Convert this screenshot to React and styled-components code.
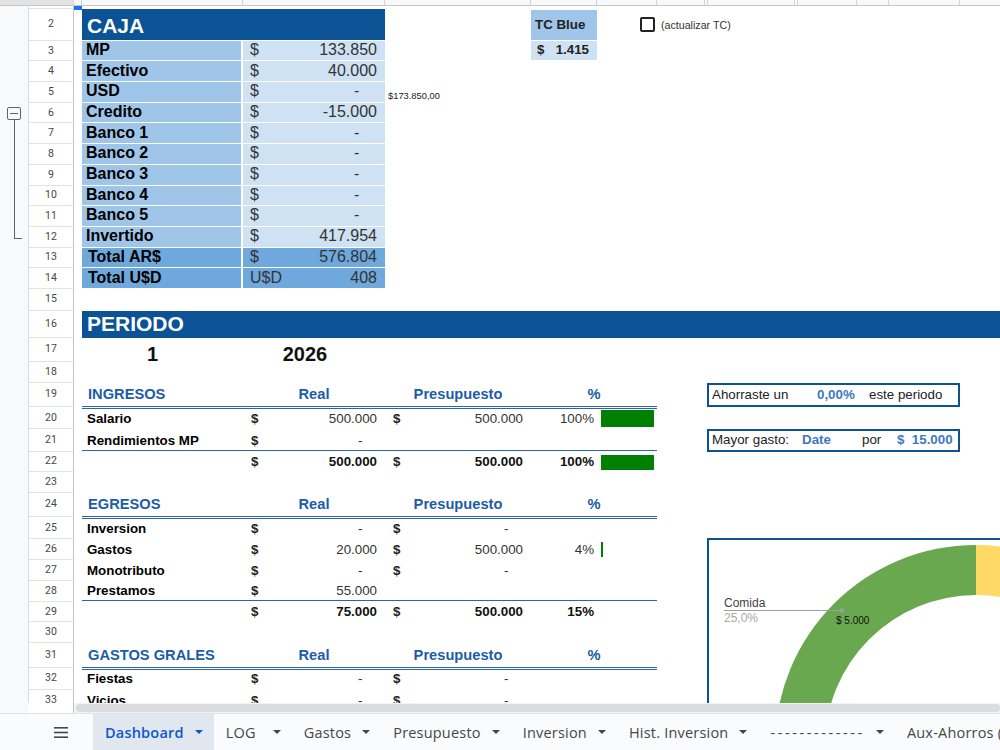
import React from 'react';
import styled, { createGlobalStyle, css } from 'styled-components';

const GlobalStyle = createGlobalStyle`
  html, body { margin: 0; padding: 0; background: #fff; }
  body { font-family: "Liberation Sans", Arial, sans-serif; overflow: hidden; }
  * { box-sizing: border-box; }
`;

// sheet geometry, taken from the row/column guides
const ROWS = [
  3, 31.7, ...Array(12).fill(20.7), 21.6, 27, 24, 21, 24.6, 22, 22.4, 20.6,
  20.4, 24.6, 22.4, 20.6, 21, 20.7, 20.7, 21, 24.6, 21.7, 21.7, 21,
];
const COLS = [28, 46, 8, 161, 142, 146, 66, 60, 50, 253, 120];
const STRIP = [74, 8, 161, 142, 146, 66, 60, 48, 3, 87, 3, 59, 32, 71, 100];

const Screen = styled.div`
  width: 1000px;
  height: 750px;
  overflow: hidden;
  display: flex;
  flex-direction: column;
  background: #fff;
`;

const ColumnStrip = styled.div`
  height: 6px;
  flex: none;
  display: flex;
  background: #f8f9fa;
  border-bottom: 1px solid #c4c7c5;
`;

const StripCell = styled.div`
  flex: none;
  width: ${(p) => p.$w}px;
  border-right: 1px solid #d3d5d3;
  background: ${(p) => (p.$corner ? '#e3e3e3' : 'transparent')};
`;

const Sheet = styled.div`
  position: relative;
  flex: none;
  height: 697px;
  overflow: hidden;
  display: grid;
  grid-template-columns: ${COLS.map((c) => c + 'px').join(' ')};
  grid-template-rows: ${ROWS.map((r) => r + 'px').join(' ')};
`;

const cell = css`
  grid-row: ${(p) => p.$r} / span ${(p) => p.$rs || 1};
  grid-column: ${(p) => p.$c} / span ${(p) => p.$cs || 1};
  min-width: 0;
  display: flex;
  align-items: flex-end;
  white-space: nowrap;
  line-height: 1.15;
`;

const Gutter = styled.div`
  grid-column: 1;
  grid-row: 1 / -1;
  background: #f8f9fa;
`;

const RowNum = styled.div`
  ${cell}
  align-items: center;
  justify-content: center;
  font-family: Roboto, "Liberation Sans", sans-serif;
  font-size: 10.5px;
  color: #444746;
  background: #fff;
  border-left: 1px solid #dadce0;
  border-right: 1px solid #c4c7c5;
  border-bottom: 1px solid #e1e3e1;
`;

const GroupToggle = styled.div`
  ${cell}
  flex-direction: column;
  align-items: flex-start;
  padding: 4.7px 0 8.6px 7px;
`;

const ToggleBox = styled.div`
  width: 14px;
  height: 13px;
  flex: none;
  border: 1px solid #5f6368;
  border-radius: 2px;
  display: flex;
  align-items: center;
  justify-content: center;
  &::after {
    content: '';
    width: 8px;
    height: 1px;
    background: #5f6368;
  }
`;

const ToggleLine = styled.div`
  flex: 1;
  width: 8px;
  margin-left: 6.5px;
  border-left: 1px solid #5f6368;
  border-bottom: 1px solid #5f6368;
`;

const Selection = styled.div`
  ${cell}
  border: 2px solid #1a73e8;
`;

/* CAJA block */
const CajaHeader = styled.div`
  ${cell}
  background: #0b5394;
  color: #fff;
  font-weight: 700;
  font-size: 21px;
  padding: 0 0 1.6px 5px;
  border-bottom: 1px solid #fff;
`;

const CajaLabel = styled.div`
  ${cell}
  background: ${(p) => (p.$total ? '#6fa8dc' : '#9fc5e8')};
  color: #000;
  font-weight: 700;
  font-size: 16px;
  padding: 0 0 1px ${(p) => (p.$total ? 6 : 4)}px;
  border-bottom: 1px solid #fff;
  border-right: 2px solid #fff;
`;

const CajaValue = styled.div`
  ${cell}
  justify-content: space-between;
  background: ${(p) => (p.$total ? '#6fa8dc' : '#cfe2f3')};
  color: #333;
  font-size: 16px;
  padding: 0 8px 1px 7px;
  border-bottom: 1px solid #fff;
`;

const Dash = styled.span`
  margin-right: 1.1em;
`;

const SideNote = styled.div`
  ${cell}
  font-size: 9.33px;
  color: #222;
  padding: 0 0 1.4px 3px;
`;

const RateHead = styled.div`
  ${cell}
  align-items: center;
  background: #9fc5e8;
  color: #222;
  font-weight: 700;
  font-size: 13.33px;
  padding-left: 4px;
  border-top: 1px solid #fff;
  border-bottom: 1px solid #fff;
`;

const RateValue = styled.div`
  ${cell}
  justify-content: space-between;
  background: #cfe2f3;
  color: #222;
  font-weight: 700;
  font-size: 13.33px;
  padding: 0 8px 3px 6px;
  border-bottom: 1px solid #fff;
`;

const CheckCell = styled.div`
  ${cell}
  align-items: flex-start;
  justify-content: flex-end;
  padding: 8px 2px 0 0;
`;

const CheckBox = styled.div`
  width: 15px;
  height: 15px;
  border: 2px solid #222;
  border-radius: 2px;
`;

const CheckText = styled.div`
  ${cell}
  align-items: center;
  font-size: 10.67px;
  color: #333;
  padding-left: 4px;
`;

/* period */
const Band = styled.div`
  ${cell}
  align-items: center;
  background: #0b5394;
  color: #fff;
  font-weight: 700;
  font-size: 21px;
  padding: 1px 0 0 5px;
`;

const PeriodValue = styled.div`
  ${cell}
  justify-content: center;
  font-weight: 700;
  font-size: 20px;
  line-height: 14px;
  color: #111;
  padding: 0 ${(p) => p.$shift}px 1px 0;
`;

/* tables */
const SectionTitle = styled.div`
  ${cell}
  color: #1c5ca8;
  font-weight: 700;
  font-size: 14.67px;
  padding: 0 0 4.3px 6px;
`;

const ColHead = styled.div`
  ${cell}
  justify-content: center;
  color: #1c5ca8;
  font-weight: 700;
  font-size: 14.67px;
  padding-bottom: 4.3px;
`;

const Rule = styled.div`
  ${cell}
  align-self: end;
  height: ${(p) => (p.$double ? 3 : 1)}px;
  margin-bottom: ${(p) => (p.$double ? -2 : 0.7)}px;
  border-top: 1px solid #2a65ae;
  border-bottom: ${(p) => (p.$double ? '1px solid #2a65ae' : 'none')};
`;

const ItemLabel = styled.div`
  ${cell}
  color: #000;
  font-weight: 700;
  font-size: 13.33px;
  padding: 0 0 3px 5px;
`;

const Money = styled.div`
  ${cell}
  justify-content: space-between;
  color: ${(p) => (p.$total ? '#111' : '#333')};
  font-weight: ${(p) => (p.$total ? 700 : 400)};
  font-size: 13.33px;
  padding: 0 8px 3px 8px;
`;

const Sign = styled.span`
  font-weight: 700;
  color: #222;
`;

const Pct = styled.div`
  ${cell}
  justify-content: flex-end;
  color: ${(p) => (p.$total ? '#111' : '#333')};
  font-weight: ${(p) => (p.$total ? 700 : 400)};
  font-size: 13.33px;
  padding: 0 3px 3px 0;
`;

const BarCell = styled.div`
  ${cell}
  align-items: stretch;
  padding: 3px 3px 2.6px 4px;
`;

const Bar = styled.div`
  background: #008000;
`;

const InfoBox = styled.div`
  ${cell}
  align-items: center;
  border: 2px solid #0b5394;
  padding: 0 0 1px 3px;
  font-size: 13.33px;
  color: #222;
`;

const InfoText = styled.span`
  flex: none;
  width: ${(p) => (p.$w ? p.$w + 'px' : 'auto')};
  color: ${(p) => (p.$hi ? '#3d78c4' : '#222')};
  font-weight: ${(p) => (p.$hi ? 700 : 400)};
`;

/* floating chart */
const ChartFrame = styled.div`
  position: absolute;
  left: 707px;
  top: 532px;
  width: 420px;
  height: 300px;
  border-top: 2px solid #0b5394;
  border-left: 2px solid #0b5394;
  background: #fff;
  text {
    font-family: "Liberation Sans", Arial, sans-serif;
  }
`;

/* bottom chrome */
const ScrollRow = styled.div`
  height: 10px;
  flex: none;
  display: flex;
`;

const ScrollCorner = styled.div`
  width: 74px;
  flex: none;
  border-left: 28px solid #f8f9fa;
  border-right: 1px solid #c4c7c5;
`;

const ScrollTrack = styled.div`
  flex: 1;
  padding: 1px 0 1px 2px;
  background: #f1f3f4;
`;

const ScrollThumb = styled.div`
  height: 100%;
  border-radius: 4px;
  background: #dadce0;
`;

const TabBar = styled.div`
  height: 37px;
  flex: none;
  display: flex;
  align-items: stretch;
  background: #f9fbfd;
  border-top: 1px solid #e1e3e1;
  font-family: "Open Sans", sans-serif;
  font-size: 14.5px;
  letter-spacing: 0.2px;
`;

const MenuButton = styled.div`
  width: 93px;
  flex: none;
  display: flex;
  align-items: center;
  padding-left: 54px;
  color: #444746;
`;

const Tab = styled.div`
  flex: none;
  display: flex;
  align-items: center;
  justify-content: space-between;
  gap: 11px;
  min-width: 78px;
  padding: 0 11px 0 12px;
  white-space: nowrap;
  background: ${(p) => (p.$active ? '#e1e7ef' : 'transparent')};
  color: ${(p) => (p.$active ? '#0b57d0' : '#444746')};
  font-weight: ${(p) => (p.$active ? 600 : 400)};
`;

const TabLabel = styled.span`
  letter-spacing: ${(p) => (p.$spread ? '2.6px' : 'inherit')};
`;

const Caret = () => (
  <svg width="8" height="4" viewBox="0 0 8 4">
    <polygon points="0,0 8,0 4,4" fill="currentColor" />
  </svg>
);

const MenuIcon = () => (
  <svg width="14" height="11" viewBox="0 0 14 11">
    <rect x="0" y="0" width="14" height="1.6" fill="currentColor" />
    <rect x="0" y="4.7" width="14" height="1.6" fill="currentColor" />
    <rect x="0" y="9.4" width="14" height="1.6" fill="currentColor" />
  </svg>
);

const caja = [
  ['MP', '$', '133.850'],
  ['Efectivo', '$', '40.000'],
  ['USD', '$', null],
  ['Credito', '$', '-15.000'],
  ['Banco 1', '$', null],
  ['Banco 2', '$', null],
  ['Banco 3', '$', null],
  ['Banco 4', '$', null],
  ['Banco 5', '$', null],
  ['Invertido', '$', '417.954'],
  ['Total AR$', '$', '576.804', true],
  ['Total U$D', 'U$D', '408', true],
];

// pres: undefined = empty cell, null = "$ -"
const sections = [
  {
    title: 'INGRESOS',
    row: 19,
    items: [
      { label: 'Salario', real: '500.000', pres: '500.000', pct: '100%', bar: 100 },
      { label: 'Rendimientos MP', real: null },
    ],
    total: { real: '500.000', pres: '500.000', pct: '100%', bar: 100 },
  },
  {
    title: 'EGRESOS',
    row: 24,
    items: [
      { label: 'Inversion', real: null, pres: null },
      { label: 'Gastos', real: '20.000', pres: '500.000', pct: '4%', bar: 4 },
      { label: 'Monotributo', real: null, pres: null },
      { label: 'Prestamos', real: '55.000' },
    ],
    total: { real: '75.000', pres: '500.000', pct: '15%' },
  },
  {
    title: 'GASTOS GRALES',
    row: 31,
    items: [
      { label: 'Fiestas', real: null, pres: null },
      { label: 'Vicios', real: null, pres: null },
    ],
  },
];

const tabs = [
  'Dashboard',
  'LOG',
  'Gastos',
  'Presupuesto',
  'Inversion',
  'Hist. Inversion',
  '-------------',
  'Aux-Ahorros (USD)',
];

function MoneyCell({ r, c, value, total }) {
  return (
    <Money $r={r} $c={c} $total={total}>
      <Sign>$</Sign>
      {value ? <span>{value}</span> : <Dash>-</Dash>}
    </Money>
  );
}

function DataRow({ r, item, total }) {
  return (
    <>
      {!total && <ItemLabel $r={r} $c={4}>{item.label}</ItemLabel>}
      <MoneyCell r={r} c={5} value={item.real} total={total} />
      {item.pres !== undefined && <MoneyCell r={r} c={6} value={item.pres} total={total} />}
      {item.pct && (
        <Pct $r={r} $c={7} $total={total}>
          {item.pct}
        </Pct>
      )}
      {item.bar && (
        <BarCell $r={r} $c={8}>
          <Bar style={{ width: item.bar + '%' }} />
        </BarCell>
      )}
    </>
  );
}

function Section({ title, row, items, total }) {
  const totalRow = row + items.length + 1;
  return (
    <>
      <SectionTitle $r={row} $c={4}>{title}</SectionTitle>
      <ColHead $r={row} $c={5}>Real</ColHead>
      <ColHead $r={row} $c={6}>Presupuesto</ColHead>
      <ColHead $r={row} $c={7} $cs={2}>%</ColHead>
      <Rule $r={row} $c={4} $cs={5} $double />
      {items.map((it, i) => (
        <DataRow key={it.label} r={row + 1 + i} item={it} />
      ))}
      {total && (
        <>
          <Rule $r={totalRow - 1} $c={4} $cs={5} />
          <DataRow r={totalRow} item={total} total />
        </>
      )}
    </>
  );
}

function DonutChart() {
  return (
    <ChartFrame>
      <svg width="420" height="300" viewBox="0 0 420 300">
        <path d="M 66 206 A 201 201 0 0 1 267 5 L 267 55 A 151 151 0 0 0 116 206 Z" fill="#6aa84f" />
        <path d="M 267 5 A 201 201 0 0 1 468 206 L 418 206 A 151 151 0 0 0 267 55 Z" fill="#ffd966" />
        <line x1="15" y1="70.5" x2="133" y2="70.5" stroke="#9e9e9e" strokeWidth="1" />
        <circle cx="133" cy="70.5" r="2.2" fill="#9e9e9e" />
        <text x="15" y="67" fontSize="12" fill="#424242">Comida</text>
        <text x="15" y="82" fontSize="12" fill="#a8a8a8">25,0%</text>
        <text x="127" y="84" fontSize="10" fill="#111">$ 5.000</text>
      </svg>
    </ChartFrame>
  );
}

export default function App() {
  return (
    <>
      <GlobalStyle />
      <Screen>
        <ColumnStrip>
          {STRIP.map((w, i) => (
            <StripCell key={i} $w={w} $corner={i === 0} />
          ))}
        </ColumnStrip>

        <Sheet>
          <Gutter />
          {ROWS.map((_, i) => (
            <RowNum key={i} $r={i + 1} $c={2}>
              {i > 0 ? i + 1 : ''}
            </RowNum>
          ))}
          <GroupToggle $r={6} $rs={7} $c={1}>
            <ToggleBox />
            <ToggleLine />
          </GroupToggle>
          <Selection $r={1} $c={3} />

          <CajaHeader $r={2} $c={4} $cs={2}>CAJA</CajaHeader>
          {caja.map(([label, sign, value, total], i) => (
            <React.Fragment key={label}>
              <CajaLabel $r={3 + i} $c={4} $total={total}>{label}</CajaLabel>
              <CajaValue $r={3 + i} $c={5} $total={total}>
                <span>{sign}</span>
                {value ? <span>{value}</span> : <Dash>-</Dash>}
              </CajaValue>
            </React.Fragment>
          ))}
          <SideNote $r={5} $c={6}>$173.850,00</SideNote>

          <RateHead $r={2} $c={7}>TC Blue</RateHead>
          <RateValue $r={3} $c={7}>
            <span>$</span>
            <span>1.415</span>
          </RateValue>
          <CheckCell $r={2} $c={8}>
            <CheckBox />
          </CheckCell>
          <CheckText $r={2} $c={9}>(actualizar TC)</CheckText>

          <Band $r={16} $c={4} $cs={8}>PERIODO</Band>
          <PeriodValue $r={17} $c={4} $shift={20}>1</PeriodValue>
          <PeriodValue $r={17} $c={5} $shift={18}>2026</PeriodValue>

          {sections.map((s) => (
            <Section key={s.title} {...s} />
          ))}

          <InfoBox $r={19} $c={10}>
            <InfoText $w={105}>Ahorraste un</InfoText>
            <InfoText $w={52} $hi>0,00%</InfoText>
            <InfoText>este periodo</InfoText>
          </InfoBox>
          <InfoBox $r={21} $c={10}>
            <InfoText $w={90}>Mayor gasto:</InfoText>
            <InfoText $w={60} $hi>Date</InfoText>
            <InfoText $w={35}>por</InfoText>
            <InfoText $hi>$&nbsp;&nbsp;15.000</InfoText>
          </InfoBox>

          <DonutChart />
        </Sheet>

        <ScrollRow>
          <ScrollCorner />
          <ScrollTrack>
            <ScrollThumb />
          </ScrollTrack>
        </ScrollRow>

        <TabBar>
          <MenuButton>
            <MenuIcon />
          </MenuButton>
          {tabs.map((t, i) => (
            <Tab key={t} $active={i === 0}>
              <TabLabel $spread={t.startsWith('---')}>{t}</TabLabel>
              <Caret />
            </Tab>
          ))}
        </TabBar>
      </Screen>
    </>
  );
}
